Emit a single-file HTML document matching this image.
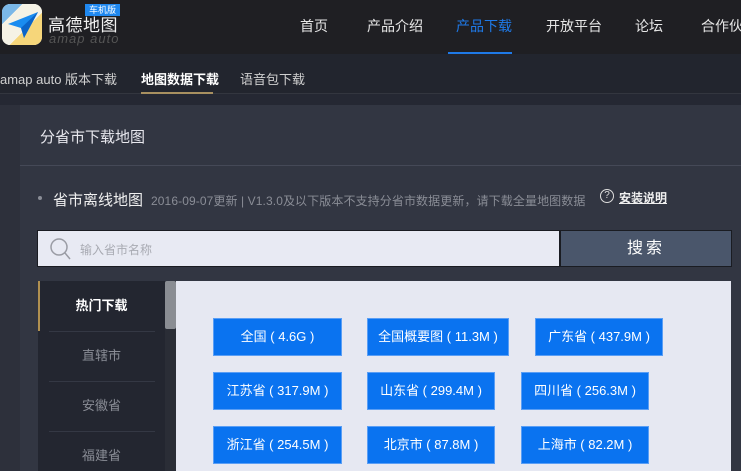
<!DOCTYPE html>
<html><head><meta charset="utf-8"><style>
*{margin:0;padding:0;box-sizing:border-box}
html,body{width:741px;height:471px;overflow:hidden}
body{background:#323642;font-family:"Liberation Sans","Noto Sans CJK SC",sans-serif;position:relative;white-space:nowrap}
.a{position:absolute}
.hdr{left:0;top:0;width:741px;height:54px;background:#1f1f23}
.nav{top:16px;font-size:14px;color:#e6e6e6}
.sub{left:0;top:54px;width:741px;height:40px;background:#22252e;border-bottom:1px solid #33363f}
.strip{left:0;top:94px;width:741px;height:11px;background:#252833}
.subt{top:69px;font-size:13px;color:#d0d0d0}
.btn{position:absolute;height:38px;background:#0a73f0;border:1px solid #5a9ef5;color:#fff;font-size:13px;text-align:center;line-height:36px}
.side{position:absolute;left:38px;width:127px;height:50px;text-align:center;line-height:50px;font-size:13px;color:#8a8d96}
.sep{position:absolute;left:49px;width:106px;height:1px;background:#343844}
</style></head><body>
<div class="a hdr"></div>
<div class="a" style="left:2px;top:4px;width:40px;height:41px;border-radius:8px;background:#f2f2ee;overflow:hidden">
<div class="a" style="left:0;top:0;width:40px;height:41px;background:linear-gradient(135deg,#7bb8e8 0 25%,#f5f2e5 25% 60%,#f6d67a 60%)"></div>
<svg class="a" style="left:4px;top:6px" width="34" height="30" viewBox="0 0 34 30"><path d="M2 14 L32 2 L18 28 L15 18 Z" fill="#1a8cf0"/><path d="M15 18 L32 2 L18 28Z" fill="#0b64c8"/></svg>
</div>
<div class="a" style="left:85px;top:4px;width:35px;height:12px;background:#1f88f0;color:#fff;font-size:9px;line-height:12px;text-align:center">车机版</div>
<div class="a" style="left:48px;top:16px;font-size:17px;color:#f0f0f0;line-height:20px;letter-spacing:0.5px">高德地图</div>
<div class="a" style="left:49px;top:31px;font-size:13px;color:#555;font-style:italic;letter-spacing:1px">amap auto</div>
<div class="a nav" style="left:300px">首页</div>
<div class="a nav" style="left:367px">产品介绍</div>
<div class="a nav" style="left:456px;color:#1f7ae8">产品下载</div>
<div class="a" style="left:448px;top:52px;width:64px;height:2px;background:#1f7ae8"></div>
<div class="a nav" style="left:546px">开放平台</div>
<div class="a nav" style="left:635px">论坛</div>
<div class="a nav" style="left:701px">合作伙伴</div>
<div class="a sub"></div>
<div class="a strip"></div>
<div class="a subt" style="left:0">amap auto 版本下载</div>
<div class="a subt" style="left:141px;color:#fff;font-weight:bold">地图数据下载</div>
<div class="a" style="left:141px;top:92px;width:72px;height:2px;background:#a89060"></div>
<div class="a subt" style="left:240px">语音包下载</div>
<div class="a" style="left:0;top:105px;width:20px;height:366px;background:#2d303b"></div>
<div class="a" style="left:40px;top:126px;font-size:15px;color:#e8e8ee">分省市下载地图</div>
<div class="a" style="left:20px;top:165px;width:721px;height:1px;background:#454957"></div>
<div class="a" style="left:38px;top:196px;width:4px;height:4px;border-radius:50%;background:#8a8d96"></div>
<div class="a" style="left:53px;top:189px;font-size:15px;color:#f0f0f0">省市离线地图</div>
<div class="a" style="left:151px;top:192px;font-size:12px;color:#8a8d96;letter-spacing:0.1px">2016-09-07更新 | V1.3.0及以下版本不支持分省市数据更新，请下载全量地图数据</div>
<div class="a" style="left:600px;top:189px;width:14px;height:14px;border:1px solid #ddd;border-radius:50%;color:#ddd;font-size:10px;line-height:12px;text-align:center">?</div>
<div class="a" style="left:619px;top:189px;font-size:12px;color:#f0f0f0;text-decoration:underline;font-weight:bold">安装说明</div>
<div class="a" style="left:37px;top:230px;width:695px;height:37px;background:#1a1c22"></div>
<div class="a" style="left:38px;top:231px;width:521px;height:35px;background:#e8eaf3"></div>
<svg class="a" style="left:49px;top:237px" width="24" height="24" viewBox="0 0 24 24"><circle cx="10" cy="10" r="8" fill="none" stroke="#9a9ca4" stroke-width="1.5"/><path d="M16 16 L21 22" stroke="#9a9ca4" stroke-width="1.5"/></svg>
<div class="a" style="left:80px;top:241px;font-size:12px;color:#a8aab2">输入省市名称</div>
<div class="a" style="left:561px;top:231px;width:170px;height:35px;background:#4a566b;color:#fff;font-size:16px;text-align:center;line-height:35px;letter-spacing:3px">搜索</div>
<div class="a" style="left:38px;top:281px;width:127px;height:190px;background:#232630"></div>
<div class="a" style="left:38px;top:281px;width:2px;height:50px;background:#b09050"></div>
<div class="side" style="top:281px;color:#fff;font-weight:bold">热门下载</div>
<div class="sep" style="top:331px"></div>
<div class="side" style="top:331px">直辖市</div>
<div class="sep" style="top:381px"></div>
<div class="side" style="top:381px">安徽省</div>
<div class="sep" style="top:431px"></div>
<div class="side" style="top:431px">福建省</div>
<div class="a" style="left:165px;top:281px;width:11px;height:190px;background:#2a2d36"></div>
<div class="a" style="left:165px;top:281px;width:11px;height:48px;background:#8a8d93;border-radius:2px"></div>
<div class="a" style="left:176px;top:281px;width:555px;height:190px;background:#e6e8f2"></div>
<div class="btn" style="left:213px;top:318px;width:129px">全国 ( 4.6G )</div>
<div class="btn" style="left:367px;top:318px;width:142px">全国概要图 ( 11.3M )</div>
<div class="btn" style="left:535px;top:318px;width:128px">广东省 ( 437.9M )</div>
<div class="btn" style="left:213px;top:372px;width:129px">江苏省 ( 317.9M )</div>
<div class="btn" style="left:367px;top:372px;width:128px">山东省 ( 299.4M )</div>
<div class="btn" style="left:521px;top:372px;width:128px">四川省 ( 256.3M )</div>
<div class="btn" style="left:213px;top:426px;width:129px">浙江省 ( 254.5M )</div>
<div class="btn" style="left:367px;top:426px;width:128px">北京市 ( 87.8M )</div>
<div class="btn" style="left:521px;top:426px;width:128px">上海市 ( 82.2M )</div>
</body></html>
